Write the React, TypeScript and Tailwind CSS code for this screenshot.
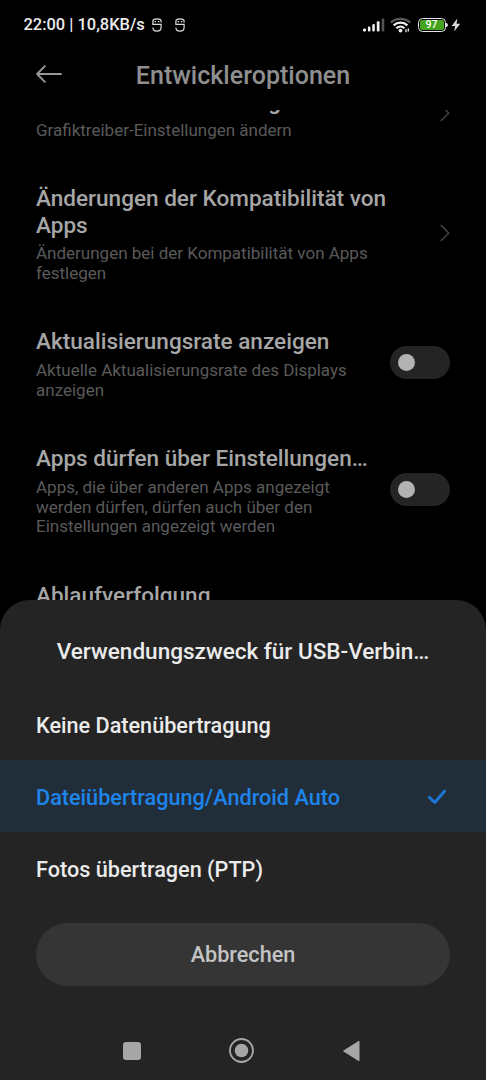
import React from 'react';

type Control = 'chevron' | 'switch' | 'none';

interface SettingRowProps {
  title: string;
  summary?: string;
  control: Control;
}

const settings: SettingRowProps[] = [
  {
    title: 'Grafiktreiber-Einstellungen',
    summary: 'Grafiktreiber-Einstellungen ändern',
    control: 'chevron',
  },
  {
    title: 'Änderungen der Kompatibilität von Apps',
    summary: 'Änderungen bei der Kompatibilität von Apps festlegen',
    control: 'chevron',
  },
  {
    title: 'Aktualisierungsrate anzeigen',
    summary: 'Aktuelle Aktualisierungsrate des Displays anzeigen',
    control: 'switch',
  },
  {
    title: 'Apps dürfen über Einstellungen…',
    summary:
      'Apps, die über anderen Apps angezeigt werden dürfen, dürfen auch über den Einstellungen angezeigt werden',
    control: 'switch',
  },
  { title: 'Ablaufverfolgung', control: 'none' },
];

const usbModes = [
  { label: 'Keine Datenübertragung', selected: false },
  { label: 'Dateiübertragung/Android Auto', selected: true },
  { label: 'Fotos übertragen (PTP)', selected: false },
];

function NotificationIcon() {
  return (
    <svg width="10" height="14" viewBox="0 0 10 14" fill="none" stroke="#dcdcdc" strokeWidth="1.2">
      <path d="M.9 6.400V3C.9 1.400 2.300.8 5 .8S9.100 1.400 9.100 3v1.400" />
      <path d="M2.600 3.600h1.500M5.900 3.600h1.500" strokeWidth="1.300" />
      <path d="M.4 6.400h8.700v3.200c0 2.400-1.500 3.600-4.100 3.600S.9 12 .9 9.600" />
    </svg>
  );
}

function StatusBar() {
  return (
    <div className="flex h-[50px] shrink-0 items-center justify-between pl-[23.500px] pr-[25px]">
      <div className="flex items-center">
        <span className="text-[16.450px] font-medium leading-none text-[#ececec]">22:00 | 10,8KB/s</span>
        <div className="ml-[7px] flex gap-[12.700px]">
          <NotificationIcon />
          <NotificationIcon />
        </div>
      </div>
      <div className="flex items-center">
        <svg width="22" height="14" viewBox="0 0 22 14" fill="#f0f0f0">
          <rect x="0" y="10.500" width="3" height="3" rx="1.200" />
          <rect x="4.900" y="8.500" width="2.500" height="5" rx="1" />
          <rect x="9.300" y="6" width="2.500" height="7.500" rx="1" />
          <rect x="13.800" y="3.300" width="2.700" height="10.200" rx="1" />
          <rect x="18.700" y="0.500" width="2.600" height="13" rx="1" fill="#555" />
        </svg>
        <svg className="ml-[5px]" width="21" height="16" viewBox="0 0 21 16" fill="none" strokeWidth="2.200">
          <path d="M.8 5.600C6 .6 15 .6 20.200 5.600" stroke="#5a5a5a" />
          <path d="M3.600 8.400C7.500 4.700 13.500 4.700 17.400 8.400" stroke="#f0f0f0" />
          <path d="M6.500 11.200C8.800 9 12.200 9 14.500 11.200" stroke="#f0f0f0" />
          <circle cx="10.500" cy="13.600" r="1.900" fill="#f0f0f0" />
          <path d="M16 12.200v3M18.300 11.600v3" stroke="#f0f0f0" strokeWidth="1.300" />
        </svg>
        <div className="ml-[6.500px] flex h-[14.500px] w-7 items-center justify-center rounded-[4.500px] border-[1.500px] border-[#e4e4e4] p-px">
          <div className="flex h-full w-full items-center justify-center rounded-[2px] bg-[#43a51d] pt-[1.200px] text-[10.500px] font-medium leading-none text-white">
            97
          </div>
        </div>
        <div className="ml-[0.500px] h-[4px] w-[2px] rounded-r bg-[#d8d8d8]" />
        <svg className="ml-[3px]" width="10" height="14" viewBox="0 0 10 14" fill="#d8d8d8">
          <path d="M6.300.5.700 8.100H4.200L3.100 13.500 9.300 5.700H5.600Z" />
        </svg>
      </div>
    </div>
  );
}

function Header() {
  return (
    <header className="flex h-[60px] shrink-0 items-center px-9 pb-[9px]">
      <svg className="-mt-[4px]" width="26" height="18" viewBox="0 0 26 18" fill="none" stroke="#979797" strokeWidth="1.900" strokeLinecap="round" strokeLinejoin="round">
        <path d="M25 9H1.200M8.800 1.200 1.100 9l7.700 7.800" />
      </svg>
      <h1 className="flex-1 pr-[26px] text-center text-[25.050px] font-medium leading-none text-[#8f8f8f]">
        Entwickleroptionen
      </h1>
    </header>
  );
}

function Chevron() {
  return (
    <svg className="mb-[2px]" width="10" height="18" viewBox="0 0 10 18" fill="none" stroke="#424242" strokeWidth="1.600">
      <path d="M.8 1 8.700 9 .8 17" />
    </svg>
  );
}

function Switch() {
  return (
    <div className="mb-[1.600px] flex h-[33px] w-[60px] shrink-0 items-center rounded-full bg-[#242424] pl-2">
      <div className="h-[17px] w-[17px] rounded-full bg-[#b2b2b2]" />
    </div>
  );
}

function SettingRow({ title, summary, control }: SettingRowProps) {
  return (
    <div className="flex shrink-0 items-center justify-between px-9 py-[21.400px]">
      <div className={control === 'chevron' ? 'w-[376px] pt-[2.600px]' : 'w-[334px] pt-[2.600px]'}>
        <h2 className="text-[22.560px] font-medium leading-[26.400px] text-[#a6a6a6]">{title}</h2>
        {summary && <p className="mt-[5.300px] text-[17px] leading-[19.800px] text-[#5a5a5a]">{summary}</p>}
      </div>
      {control === 'chevron' && <Chevron />}
      {control === 'switch' && <Switch />}
    </div>
  );
}

function UsbSheet() {
  return (
    <section className="flex h-[480px] shrink-0 flex-col rounded-t-[30px] bg-[#242424]">
      <h2 className="pb-[23.300px] pt-[39px] text-center text-[22.560px] font-medium leading-[26px] text-[#ebebeb]">
        Verwendungszweck für USB-Verbin…
      </h2>
      <div>
        {usbModes.map(({ label, selected }) => (
          <div
            key={label}
            className={
              selected
                ? 'flex h-[72px] items-center justify-between bg-[#222d3a] pl-9 pr-[39px] pt-[2.500px] text-[#1e85ea]'
                : 'flex h-[72px] items-center px-9 pt-[2.500px] text-[#ebebeb]'
            }
          >
            <span className="text-[21.650px] font-medium leading-none">{label}</span>
            {selected && (
              <svg className="mb-[2px]" width="20" height="16" viewBox="0 0 20 16" fill="none" stroke="#1b76d2" strokeWidth="3" strokeLinecap="round" strokeLinejoin="round">
                <path d="M2.300 8.200 7.700 13.500 17.600 2.200" />
              </svg>
            )}
          </div>
        ))}
      </div>
      <button className="mx-9 mt-[18.700px] h-[63px] shrink-0 rounded-full bg-[#353535] pt-[1.500px] text-[21.650px] font-medium text-[#c4c4c4]">
        Abbrechen
      </button>
      <nav className="flex flex-1 items-center pl-[122.500px] pt-9">
        <div className="h-[18px] w-[18px] rounded-[3px] bg-[#a6a6a6]" />
        <svg className="ml-[88.500px]" width="25" height="25" viewBox="0 0 25 25">
          <circle cx="12.500" cy="12.500" r="11.500" fill="none" stroke="#a6a6a6" strokeWidth="1.800" />
          <circle cx="12.500" cy="12.500" r="6.800" fill="#a6a6a6" />
        </svg>
        <svg className="ml-[88px]" width="18" height="22" viewBox="0 0 18 22" fill="#a6a6a6" stroke="#a6a6a6" strokeLinejoin="round">
          <path d="M1.500 11 17 1.200v19.600Z" />
        </svg>
      </nav>
    </section>
  );
}

export default function App() {
  return (
    <div className="flex h-[1080px] w-[486px] flex-col overflow-hidden bg-black font-['Roboto',sans-serif]">
      <StatusBar />
      <Header />
      <main className="flex min-h-0 flex-1 flex-col overflow-hidden">
        <div className="-mt-[44.500px]">
          {settings.map((setting) => (
            <SettingRow key={setting.title} {...setting} />
          ))}
        </div>
      </main>
      <UsbSheet />
    </div>
  );
}
